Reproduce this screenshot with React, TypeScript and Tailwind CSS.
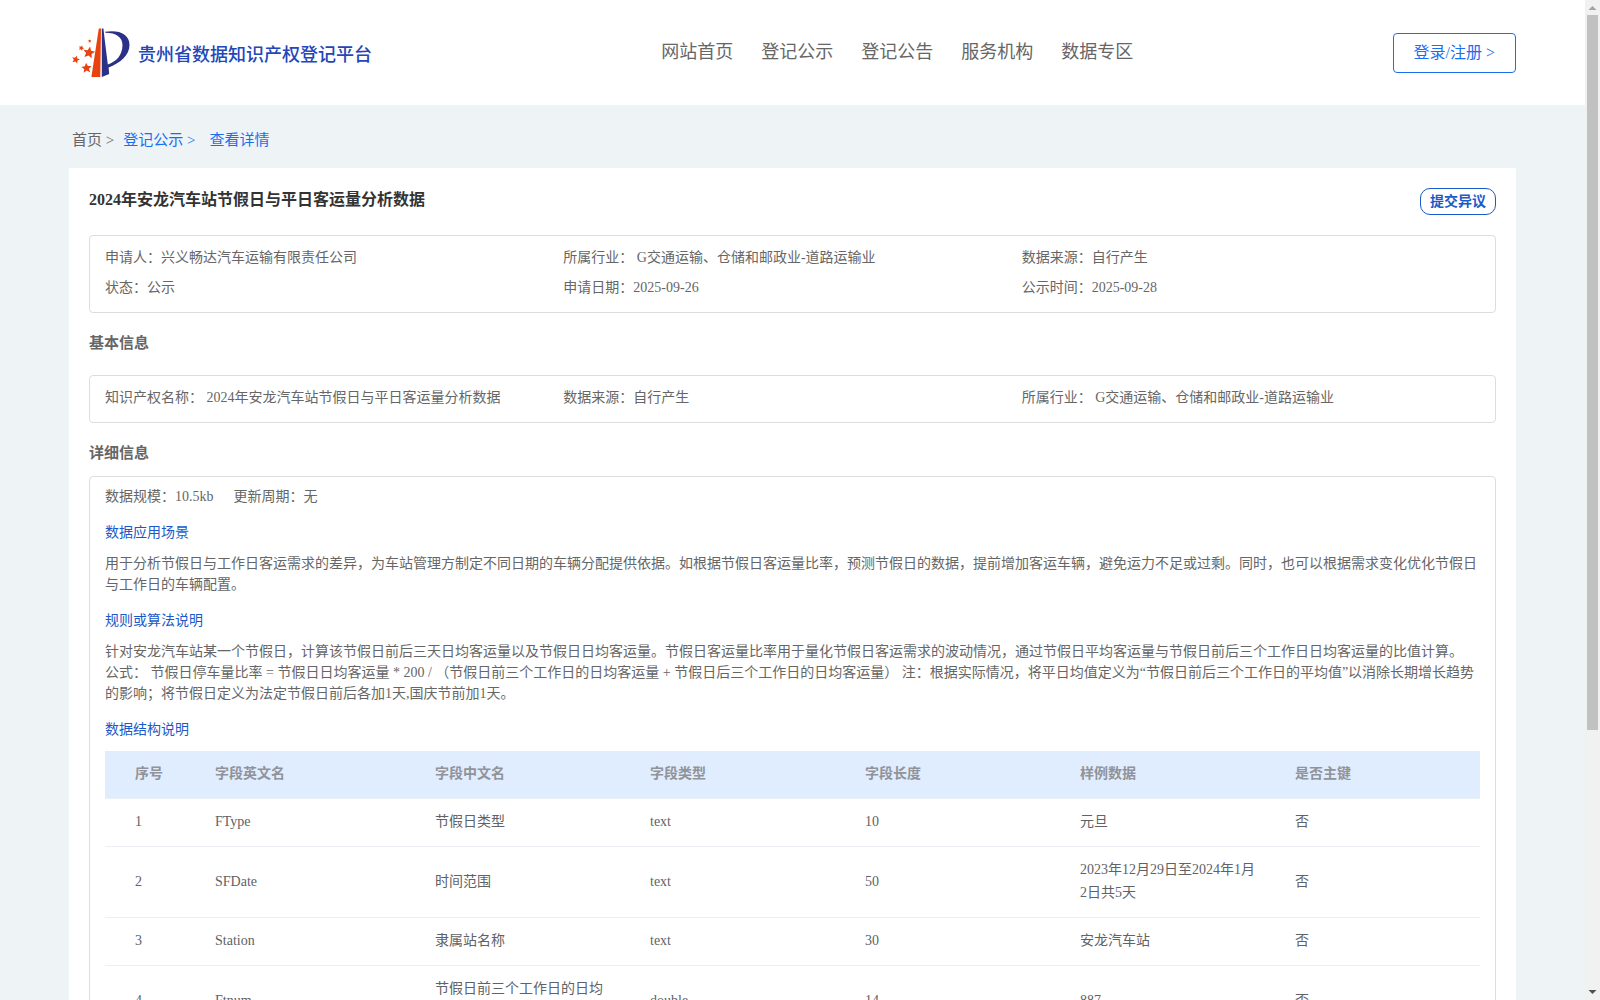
const navItems = ["网站首页", "登记公示", "登记公告", "服务机构", "数据专区"]

const summary = [
  { label: "申请人：", value: "兴义畅达汽车运输有限责任公司" },
  { label: "所属行业：", value: " G交通运输、仓储和邮政业-道路运输业" },
  { label: "数据来源：", value: "自行产生" },
  { label: "状态：", value: "公示" },
  { label: "申请日期：", value: "2025-09-26" },
  { label: "公示时间：", value: "2025-09-28" },
]

const basicInfo = [
  { label: "知识产权名称：", value: " 2024年安龙汽车站节假日与平日客运量分析数据" },
  { label: "数据来源：", value: "自行产生" },
  { label: "所属行业：", value: " G交通运输、仓储和邮政业-道路运输业" },
]

const columns = ["序号", "字段英文名", "字段中文名", "字段类型", "字段长度", "样例数据", "是否主键"]

const rows = [
  ["1", "FType", "节假日类型", "text", "10", "元旦", "否"],
  ["2", "SFDate", "时间范围", "text", "50", "2023年12月29日至2024年1月2日共5天", "否"],
  ["3", "Station", "隶属站名称", "text", "30", "安龙汽车站", "否"],
  ["4", "Ftnum", "节假日前三个工作日的日均客运量", "double", "14", "887", "否"],
]

const STAR = "M0-10l2.900 6.500 7 .5-5.300 4.700 1.600 7L0 5l-6.200 3.700 1.600-7L-9.900-3l7-.5z"

function Logo() {
  return (
    <svg width="58" height="50" viewBox="0 0 58 50" aria-hidden="true">
      <path fill="#e8430f" d="M26.800 0.500h2.200L28.300 49h-8.900z" />
      <path
        fill="#2a3186"
        d="M29.800 0.500h1.600L33 14l2.800 22.500C44.500 33.500 50.500 27 50.500 17 50.500 9 44 5 33.500 4.800L33 3.800C47 1.500 57.500 6 57.500 17 57.500 27.500 48 35 36.600 39.500L37.200 46 29.800 49z"
      />
      <g fill="#e8430f">
        <path d={STAR} transform="translate(17 24.500) rotate(10) scale(.6)" />
        <path d={STAR} transform="translate(14.500 40) rotate(-5) scale(.52)" />
        <path d={STAR} transform="translate(3.800 31.500) rotate(15) scale(.4)" />
        <path d={STAR} transform="translate(9.300 20) rotate(20) scale(.28)" />
        <path d={STAR} transform="translate(17.700 13) scale(.18)" />
      </g>
    </svg>
  )
}

function InfoBox({ items }: { items: { label: string; value: string }[] }) {
  return (
    <dl className="grid grid-cols-3 rounded border border-[#dddddd] px-[15px] pt-[7px] pb-[9px] leading-[30px]">
      {items.map((item) => (
        <div key={item.label} className="flex whitespace-pre">
          <dt>{item.label}</dt>
          <dd>{item.value}</dd>
        </div>
      ))}
    </dl>
  )
}

function Scrollbar() {
  return (
    <div className="flex w-[15px] shrink-0 flex-col items-center justify-between bg-[#f1f1f1]" aria-hidden="true">
      <svg width="15" height="15" viewBox="0 0 15 15">
        <path fill="#a3a3a3" d="M7.500 6l4 4h-8z" />
      </svg>
      <div className="flex w-[11px] flex-1 flex-col">
        <div className="h-[73.7%] bg-[#c1c1c1]" />
      </div>
      <svg width="15" height="15" viewBox="0 0 15 15">
        <path fill="#505050" d="M7.500 9l4-4h-8z" />
      </svg>
    </div>
  )
}

export default function App() {
  return (
    <div className="flex h-screen bg-[#eef3f6] font-['Liberation_Serif','Noto_Sans_CJK_SC',serif] text-sm text-[#666666]">
      <div className="min-w-0 flex-1 overflow-y-auto [scrollbar-width:none]">
        <header className="flex h-[105px] items-center justify-between bg-white px-[69px]">
          <a href="#" className="flex items-center gap-2 pl-[3px]">
            <Logo />
            <span className="pt-1 text-lg font-medium text-[#2446b8]">贵州省数据知识产权登记平台</span>
          </a>
          <nav className="flex gap-7 pb-[2px] pl-[30px] text-lg">
            {navItems.map((item) => (
              <a key={item} href="#">
                {item}
              </a>
            ))}
          </nav>
          <button className="h-10 rounded border border-[#1a6ff0] px-5 text-base text-[#1a6ff0]">登录/注册 &gt;</button>
        </header>

        <main className="px-[69px]">
          <div className="flex h-[63px] items-center pt-2 pl-[3px] text-[15px]">
            <a href="#" className="mr-[9px]">
              首页 &gt;
            </a>
            <a href="#" className="mr-[14px] text-[#1a6ff0]">
              登记公示 &gt;
            </a>
            <a href="#" className="text-[#1a6ff0]">
              查看详情
            </a>
          </div>

          <div className="bg-white p-5">
            <div className="flex h-[47px] items-start justify-between">
              <h1 className="text-base font-bold text-[#333333]">2024年安龙汽车站节假日与平日客运量分析数据</h1>
              <button className="h-[27px] rounded-[10px] border border-[#1a5ac8] px-[9px] text-sm font-bold text-[#1a5ac8]">
                提交异议
              </button>
            </div>

            <InfoBox items={summary} />
            <h2 className="flex h-[62px] items-center text-[15px] font-bold">基本信息</h2>
            <InfoBox items={basicInfo} />
            <h2 className="flex h-[53px] items-center pt-2 text-[15px] font-bold">详细信息</h2>

            <div className="rounded border border-[#dddddd] px-[15px] pt-[9px] pb-5 leading-[21px]">
              <div className="flex gap-5">
                <p>数据规模：10.5kb</p>
                <p>更新周期：无</p>
              </div>
              <h3 className="mt-[15px] text-[#1a5ac8]">数据应用场景</h3>
              <p className="mt-[10px]">
                用于分析节假日与工作日客运需求的差异，为车站管理方制定不同日期的车辆分配提供依据。如根据节假日客运量比率，预测节假日的数据，提前增加客运车辆，避免运力不足或过剩。同时，也可以根据需求变化优化节假日与工作日的车辆配置。
              </p>
              <h3 className="mt-[15px] text-[#1a5ac8]">规则或算法说明</h3>
              <p className="mt-[10px]">
                针对安龙汽车站某一个节假日，计算该节假日前后三天日均客运量以及节假日日均客运量。节假日客运量比率用于量化节假日客运需求的波动情况，通过节假日平均客运量与节假日前后三个工作日日均客运量的比值计算。
                公式： 节假日停车量比率 = 节假日日均客运量 * 200 / （节假日前三个工作日的日均客运量 + 节假日后三个工作日的日均客运量） 注：根据实际情况，将平日均值定义为“节假日前后三个工作日的平均值”以消除长期增长趋势的影响；将节假日定义为法定节假日前后各加1天,国庆节前加1天。
              </p>
              <h3 className="mt-[15px] text-[#1a5ac8]">数据结构说明</h3>

              <table className="mt-[11px] w-full table-fixed text-left leading-[23px] text-[#606266]">
                <colgroup>
                  <col className="w-[90px]" />
                  <col className="w-[220px]" />
                  <col className="w-[215px]" />
                  <col className="w-[215px]" />
                  <col className="w-[215px]" />
                  <col className="w-[215px]" />
                  <col className="w-[205px]" />
                </colgroup>
                <thead className="bg-[#e0edff] text-[#909399]">
                  <tr className="border-b border-[#ebeef5]">
                    {columns.map((column) => (
                      <th key={column} className="px-5 pt-[11px] pb-[13px] font-bold first:pr-0 first:pl-[30px]">
                        {column}
                      </th>
                    ))}
                  </tr>
                </thead>
                <tbody>
                  {rows.map((row) => (
                    <tr key={row[0]} className="border-b border-[#ebeef5]">
                      {row.map((cell, i) => (
                        <td key={i} className="px-5 pt-[11px] pb-[13px] first:pr-0 first:pl-[30px]">
                          {cell}
                        </td>
                      ))}
                    </tr>
                  ))}
                </tbody>
              </table>
            </div>
          </div>
        </main>
      </div>
      <Scrollbar />
    </div>
  )
}
